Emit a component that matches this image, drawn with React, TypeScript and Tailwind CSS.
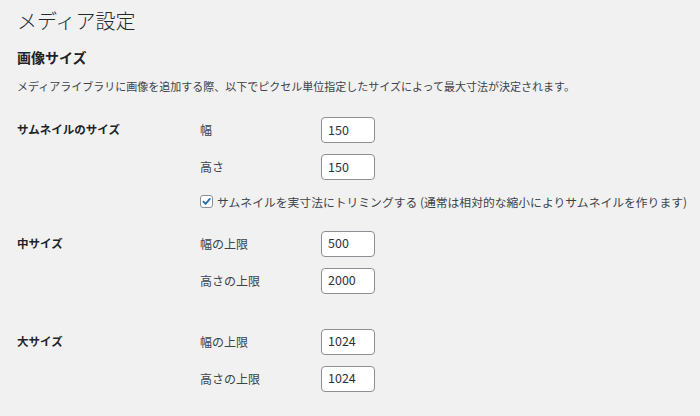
const font = "font-['Noto_Sans_CJK_JP','Noto_Sans',sans-serif]";

function NumField({ value }: { value: string }) {
  return (
    <div className="flex h-[26px] w-[54px] items-center rounded-[4px] border border-[#8c8f94] bg-white pl-[6px] text-[12.5px] text-[#2c3338]">
      {value}
    </div>
  );
}

function FieldRow({ label, value }: { label: string; value: string }) {
  return (
    <div className="flex items-center">
      <div className="w-[121px] shrink-0 text-[12px] text-[#3c434a]">{label}</div>
      <NumField value={value} />
    </div>
  );
}

function Section({
  title,
  rows,
  className,
  children,
}: {
  title: string;
  rows: { label: string; value: string }[];
  className?: string;
  children?: React.ReactNode;
}) {
  return (
    <div className={`flex ${className ?? ""}`}>
      <div className="flex h-[26px] w-[183px] shrink-0 items-center text-[11.5px] font-bold text-[#1d2327]">
        {title}
      </div>
      <div className="flex flex-col gap-[11px]">
        {rows.map((r) => (
          <FieldRow key={r.label} label={r.label} value={r.value} />
        ))}
        {children}
      </div>
    </div>
  );
}

export default function App() {
  return (
    <div className={`h-[416px] w-[700px] overflow-hidden bg-[#f1f1f1] px-[17px] ${font}`}>
      <h1 className="mt-[7px] text-[20px] leading-[28px] font-light text-[#23282d]">
        メディア設定
      </h1>
      <h2 className="mt-[12px] text-[14px] leading-[20px] font-bold text-[#1d2327]">
        画像サイズ
      </h2>
      <p className="mt-[11px] text-[11px] leading-[16px] whitespace-nowrap text-[#3c434a]">
        メディアライブラリに画像を追加する際、以下でピクセル単位指定したサイズによって最大寸法が決定されます。
      </p>

      <Section
        className="mt-[23px]"
        title="サムネイルのサイズ"
        rows={[
          { label: "幅", value: "150" },
          { label: "高さ", value: "150" },
        ]}
      >
        <label className="mt-[2px] flex items-center gap-[4px] text-[11.8px] whitespace-nowrap text-[#3c434a]">
          <span className="flex h-[13px] w-[13px] items-center justify-center rounded-[3px] border border-[#8c8f94] bg-white">
            <svg viewBox="0 0 12 12" className="h-[11px] w-[11px]">
              <path
                d="M2.6 6.2 L5 8.6 L9.6 3.2"
                fill="none"
                stroke="#2271b1"
                strokeWidth="2"
                strokeLinecap="round"
                strokeLinejoin="round"
              />
            </svg>
          </span>
          サムネイルを実寸法にトリミングする (通常は相対的な縮小によりサムネイルを作ります)
        </label>
      </Section>

      <Section
        className="mt-[20px]"
        title="中サイズ"
        rows={[
          { label: "幅の上限", value: "500" },
          { label: "高さの上限", value: "2000" },
        ]}
      />

      <Section
        className="mt-[35px]"
        title="大サイズ"
        rows={[
          { label: "幅の上限", value: "1024" },
          { label: "高さの上限", value: "1024" },
        ]}
      />
    </div>
  );
}
